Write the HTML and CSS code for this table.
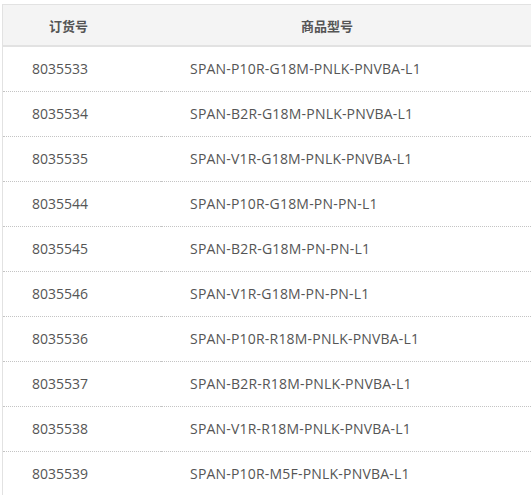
FILE: index.html
```html
<!DOCTYPE html>
<html>
<head>
<meta charset="utf-8">
<link rel="stylesheet" href="styles.css">
</head>
<body>
<div class="wrap">
<table class="tbl">
<thead>
<tr><th class="c1">订货号</th><th class="c2">商品型号</th></tr>
</thead>
<tbody>
<tr><td class="c1">8035533</td><td class="c2">SPAN-P10R-G18M-PNLK-PNVBA-L1</td></tr>
<tr><td class="c1">8035534</td><td class="c2">SPAN-B2R-G18M-PNLK-PNVBA-L1</td></tr>
<tr><td class="c1">8035535</td><td class="c2">SPAN-V1R-G18M-PNLK-PNVBA-L1</td></tr>
<tr><td class="c1">8035544</td><td class="c2">SPAN-P10R-G18M-PN-PN-L1</td></tr>
<tr><td class="c1">8035545</td><td class="c2">SPAN-B2R-G18M-PN-PN-L1</td></tr>
<tr><td class="c1">8035546</td><td class="c2">SPAN-V1R-G18M-PN-PN-L1</td></tr>
<tr><td class="c1">8035536</td><td class="c2">SPAN-P10R-R18M-PNLK-PNVBA-L1</td></tr>
<tr><td class="c1">8035537</td><td class="c2">SPAN-B2R-R18M-PNLK-PNVBA-L1</td></tr>
<tr><td class="c1">8035538</td><td class="c2">SPAN-V1R-R18M-PNLK-PNVBA-L1</td></tr>
<tr><td class="c1">8035539</td><td class="c2">SPAN-P10R-M5F-PNLK-PNVBA-L1</td></tr>
</tbody>
</table>
</div>
</body>
</html>
```
FILE: styles.css
```css
html, body {
  margin: 0;
  padding: 0;
  background: #fff;
  overflow: hidden;
}
.wrap {
  padding: 4px 0 0 2px;
}
.tbl {
  border-collapse: collapse;
  width: 100%;
  border-top: 1px solid #e2e2e2;
  border-left: 1px solid #e2e2e2;
  font-family: "Open Sans", "Noto Sans CJK SC", sans-serif;
  font-size: 14px;
  color: #555;
}
.tbl th {
  background: #f4f4f4;
  height: 40px;
  padding: 0;
  text-align: left;
  font-weight: bold;
  font-size: 13px;
  color: #555;
  font-family: "Noto Sans CJK SC", sans-serif;
  border-bottom: 2px solid #e2e2e2;
}
.tbl th.c1 { padding-left: 46px; width: 112px; }
.tbl th.c2 { padding-left: 140px; }
.tbl td {
  height: 43px;
  padding: 0 0 1px 0;
  border-bottom: 1px dotted #c4c4c4;
}
.tbl td.c1 { padding-left: 29px; width: 129px; }
.tbl td.c2 { padding-left: 29px; letter-spacing: 0.2px; }
```
